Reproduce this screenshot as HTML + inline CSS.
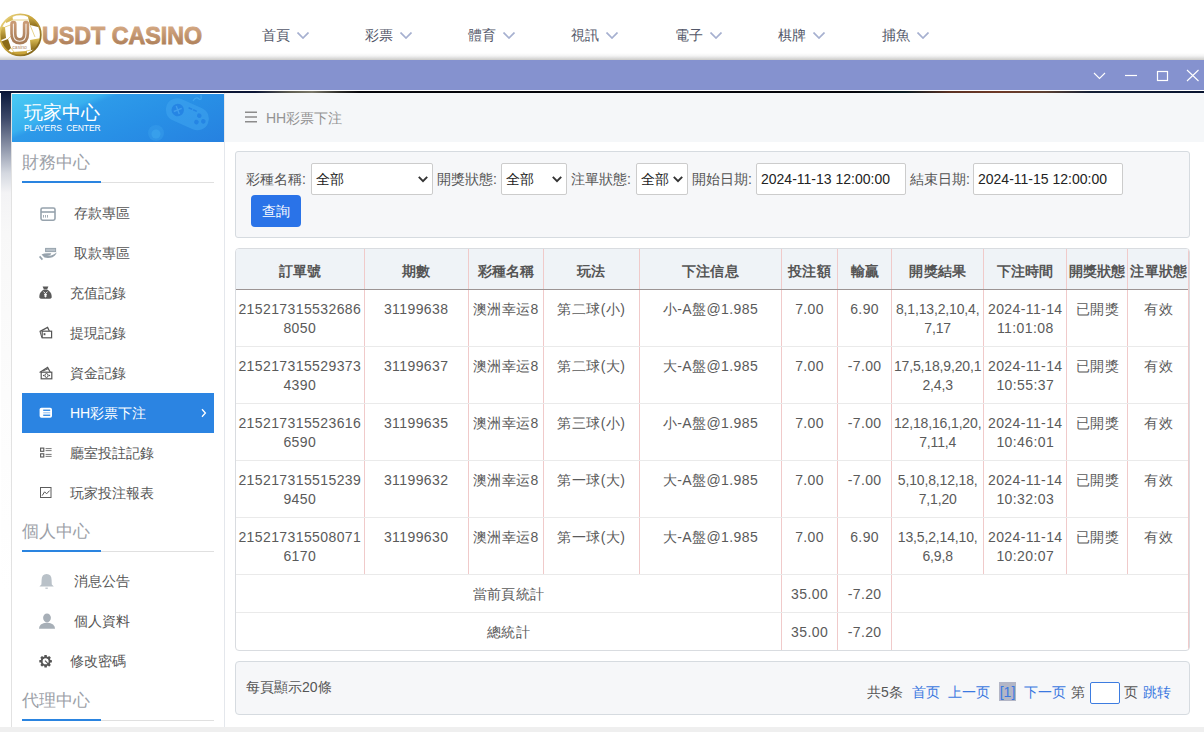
<!DOCTYPE html>
<html><head><meta charset="utf-8">
<style>
*{box-sizing:border-box;margin:0;padding:0}
html,body{width:1204px;height:732px;overflow:hidden;background:#fff;font-family:"Liberation Sans",sans-serif;position:relative}
.abs{position:absolute}
/* header */
#hdr{left:0;top:0;width:1204px;height:60px;background:#fff}
#hdrshadow{left:0;top:53px;width:1204px;height:7px;background:linear-gradient(#fff 0,#f4f4f4 40%,#dcdcdc 75%,#cdcbc7 100%)}
.nav{top:26px;font-size:14px;color:#535769;line-height:18px;white-space:nowrap}
.nav svg{position:absolute;left:35px;top:6px}
#purple{left:0;top:60px;width:1204px;height:30px;background:#8592cf}
#wline{left:0;top:90px;width:1204px;height:1px;background:#fff}
#dline{left:0;top:91px;width:1204px;height:2px;background:linear-gradient(to right,#0b1636 0,#0b1636 255px,#5e5d52 290px,#7a786a 312px,#2a2a28 340px,#05060c 360px,#05060c 850px,#0a1a22 905px,#5c3224 950px,#6e3a28 1000px,#5c4032 1045px,#142036 1090px,#081430 1204px)}
/* left strip */
#strip{left:1px;top:93px;width:10px;height:634px;background:linear-gradient(#0c1a3c 0,#3c4868 25px,#8e96aa 55px,#d4d8e0 80px,#f3f3f5 100px,#f8f8f8 140px,#fcfcfc 300px,#fff 500px)}
#side{left:11px;top:93px;width:214px;height:634px;background:#fff;border-left:1px solid #e2e2e2;border-right:1px solid #e4e7ec}
#sidehead{left:12px;top:94px;width:212px;height:48px;background:linear-gradient(157deg,#4acbf4 0%,#38b0ef 28%,#2d9ae9 33%,#2890e6 60%,#2681e0 100%)}
.sectitle{left:22px;font-size:17px;color:#9ca1a8;line-height:20px;margin-top:1px}
.secline{left:22px;width:192px;height:2px;border-bottom:1px solid #e0e0e0}
.secline i{position:absolute;left:0;top:0;width:79px;height:2px;background:#2a84e0}
.mi{font-size:14px;color:#555;line-height:16px;white-space:nowrap}
.ico{position:absolute}
#active{left:22px;top:393px;width:192px;height:40px;background:#2b84e2}
/* main */
#crumb{left:225px;top:93px;width:979px;height:49px;background:#f5f7f9}
#panel{left:235px;top:151px;width:955px;height:87px;background:#f6f7f9;border:1px solid #d6dbe0;border-radius:3px}
.lbl{font-size:14px;color:#555;line-height:16px;white-space:nowrap}
.sel{background:#fff;border:1px solid #ccc;border-radius:2px;height:32px;font-size:14px;color:#222;line-height:30px;padding-left:4px;white-space:nowrap}
.sel svg{position:absolute;right:4px;top:12px}
#btn{left:251px;top:195px;width:50px;height:32px;background:#2a73e8;border-radius:4px;color:#fff;font-size:14px;line-height:32px;text-align:center}
#bottomstrip{left:0;top:727px;width:1204px;height:5px;background:#efefef}
/* table */
#tbl{left:235px;top:248px;width:955px;height:403px;border:1px solid #d9dce0;border-radius:4px;overflow:hidden;background:#fff}
table{border-collapse:collapse;table-layout:fixed;width:953px}
td,th{font-size:14px;letter-spacing:0.4px;color:#5a5a5a;text-align:center;vertical-align:top;line-height:19px;white-space:nowrap;overflow:hidden}
th{height:40px;padding-top:5px;background:#eff3f7;font-weight:bold;color:#555;vertical-align:middle;border-bottom:1px solid #9c9494;border-left:1px solid #f0caca}
td{height:57px;padding-top:10px;border-left:1px solid #f0caca;border-bottom:1px solid #eaeaea}
tr.sum td{height:38px;padding-top:10px}
th:first-child,td:first-child{border-left:none}
td:nth-child(8){letter-spacing:-0.15px;overflow:visible}
th{letter-spacing:0.1px}
#pager{left:235px;top:661px;width:955px;height:54px;background:#f6f7f9;border:1px solid #d6dbe0;border-radius:4px}
.pg{font-size:14px;color:#555;line-height:16px;white-space:nowrap}
.blue{color:#3a78e0}
</style></head><body>
<div id="hdr" class="abs"></div>
<div id="hdrshadow" class="abs"></div>
<!-- logo -->
<svg class="abs" style="left:0;top:8px" width="210" height="52" viewBox="0 8 210 52">
<defs>
<linearGradient id="gold" x1="0" y1="0" x2="1" y2="1"><stop offset="0" stop-color="#efdc8c"/><stop offset=".45" stop-color="#c9a43a"/><stop offset="1" stop-color="#6e5310"/></linearGradient>
<linearGradient id="gold2" x1="0" y1="0" x2="0" y2="1"><stop offset="0" stop-color="#e2c45a"/><stop offset="1" stop-color="#8a6a18"/></linearGradient>
<linearGradient id="txt" x1="0" y1="0" x2="0" y2="1"><stop offset="0" stop-color="#dcb08a"/><stop offset="1" stop-color="#a57650"/></linearGradient>
<linearGradient id="ug" x1="0" y1="0" x2="0" y2="1"><stop offset="0" stop-color="#c99a74"/><stop offset="1" stop-color="#a87c58"/></linearGradient>
</defs>
<clipPath id="ballclip"><circle cx="20.3" cy="34.8" r="20.6"/></clipPath>
<circle cx="20.3" cy="34.8" r="21" fill="#fff"/>
<g clip-path="url(#ballclip)">
<path d="M27 13.5 L39 20 L38 27 L30 25 Z" fill="url(#gold2)"/>
<path d="M5 15 L12 13.5 L13 20 L6 23 Z" fill="#d9bc5a"/>
<path d="M-1 26 L5 27 L6 38 L-1 41 Z" fill="url(#gold2)"/>
<path d="M0 42 L8 39 L11 48 L5 54 Z" fill="#8a6a18"/>
<path d="M30 40 L41 38 L39 49 L31 50 Z" fill="url(#gold2)"/>
<path d="M12 52 L27 51 L27 58 L13 58 Z" fill="#c9a43a"/>
<path d="M12 20 L28 20 M5 27 L13 24 M30 25 L35 37 M8 39 L12 35 M31 50 L26 51 M11 48 L14 52" stroke="#e0c870" stroke-width="0.8" fill="none"/>
</g>
<circle cx="20.3" cy="34.8" r="20.5" fill="none" stroke="url(#gold)" stroke-width="1.8"/>
<path d="M13.4 24 V33.5 Q13.4 41.2 19.7 41.2 Q26 41.2 26 33.5 V24" stroke="url(#ug)" stroke-width="6.4" fill="none" stroke-linecap="round"/>
<path d="M13.4 24 V33.5 Q13.4 41.2 19.7 41.2 Q26 41.2 26 33.5 V24" stroke="#fff" stroke-width="1.1" fill="none" stroke-linecap="round" opacity=".85"/>
<text x="19.6" y="48.8" font-family="Liberation Sans" font-size="5" fill="#b08a6a" text-anchor="middle">casino</text>
<text x="42" y="44.4" font-family="Liberation Sans" font-weight="bold" font-size="24.6" fill="url(#txt)" stroke="url(#txt)" stroke-width="0.9" textLength="160" lengthAdjust="spacingAndGlyphs">USDT CASINO</text>
</svg>
<!-- nav -->
<div class="abs nav" style="left:262px">首頁<svg width="12" height="7" viewBox="0 0 12 7"><path d="M0.5 0.5 L6 6 L11.5 0.5" stroke="#a6b0d0" stroke-width="1.7" fill="none"/></svg></div>
<div class="abs nav" style="left:365px">彩票<svg width="12" height="7" viewBox="0 0 12 7"><path d="M0.5 0.5 L6 6 L11.5 0.5" stroke="#a6b0d0" stroke-width="1.7" fill="none"/></svg></div>
<div class="abs nav" style="left:468px">體育<svg width="12" height="7" viewBox="0 0 12 7"><path d="M0.5 0.5 L6 6 L11.5 0.5" stroke="#a6b0d0" stroke-width="1.7" fill="none"/></svg></div>
<div class="abs nav" style="left:571px">視訊<svg width="12" height="7" viewBox="0 0 12 7"><path d="M0.5 0.5 L6 6 L11.5 0.5" stroke="#a6b0d0" stroke-width="1.7" fill="none"/></svg></div>
<div class="abs nav" style="left:675px">電子<svg width="12" height="7" viewBox="0 0 12 7"><path d="M0.5 0.5 L6 6 L11.5 0.5" stroke="#a6b0d0" stroke-width="1.7" fill="none"/></svg></div>
<div class="abs nav" style="left:778px">棋牌<svg width="12" height="7" viewBox="0 0 12 7"><path d="M0.5 0.5 L6 6 L11.5 0.5" stroke="#a6b0d0" stroke-width="1.7" fill="none"/></svg></div>
<div class="abs nav" style="left:882px">捕魚<svg width="12" height="7" viewBox="0 0 12 7"><path d="M0.5 0.5 L6 6 L11.5 0.5" stroke="#a6b0d0" stroke-width="1.7" fill="none"/></svg></div>

<div id="purple" class="abs"></div>
<svg class="abs" style="left:1090px;top:66px" width="114" height="20" viewBox="1090 66 114 20">
<path d="M1094 73 L1099.5 78.5 L1105 73" stroke="#fff" stroke-width="1.1" fill="none"/>
<path d="M1125 75.5 H1137" stroke="#fff" stroke-width="1.2"/>
<rect x="1157.5" y="71.5" width="10" height="9" stroke="#fff" stroke-width="1.2" fill="none"/>
<path d="M1187 70 L1198.5 81 M1198.5 70 L1187 81" stroke="#fff" stroke-width="1.1"/>
</svg>
<div id="wline" class="abs"></div>
<div id="dline" class="abs"></div>

<!-- sidebar -->
<div id="strip" class="abs"></div>
<div id="side" class="abs"></div>
<div id="sidehead" class="abs"></div>
<svg class="abs" style="left:12px;top:94px" width="212" height="48" viewBox="12 94 212 48">
<path d="M22 94 L12 94 L12 120 Z" fill="#46c9f3" opacity=".0"/>
<g transform="rotate(24 188 114)">
<rect x="165" y="103" width="45" height="23" rx="11.5" fill="#3ea4ee" opacity=".6"/>
<circle cx="177" cy="114.5" r="6.2" fill="#2585e4"/>
<path d="M174 111.5 L180 117.5 M180 111.5 L174 117.5" stroke="#3f9ded" stroke-width="1.4"/>
<circle cx="199" cy="111" r="2.3" fill="#2585e4"/><circle cx="205" cy="114.5" r="2.3" fill="#2585e4"/>
<circle cx="199" cy="118" r="2.3" fill="#2585e4"/><circle cx="193" cy="114.5" r="2.3" fill="#2585e4" opacity=".0"/>
<path d="M186 108 H190 M191 108 H195" stroke="#2585e4" stroke-width="1.5"/>
</g>
<path d="M193 101 Q196 96 199 99 Q202 101 201 95" stroke="#3ea4ee" stroke-width="1.2" fill="none"/>
<circle cx="156" cy="133" r="8" fill="#3aa0ec" opacity=".45"/>
<circle cx="156" cy="134" r="4.5" fill="#3ea6ee" opacity=".6"/>
</svg>
<div class="abs" style="left:24px;top:103px;font-size:19px;line-height:20px;color:#fff;white-space:nowrap">玩家中心</div>
<div class="abs" style="left:24px;top:123px;font-size:8.5px;line-height:10px;color:#fff;letter-spacing:-0.12px;white-space:nowrap">PLAYERS&nbsp; CENTER</div>

<div class="abs sectitle" style="top:152px">財務中心</div>
<div class="abs secline" style="top:181px"><i></i></div>

<div class="abs mi" style="left:74px;top:205px">存款專區</div>
<div class="abs mi" style="left:74px;top:245px">取款專區</div>
<div class="abs mi" style="left:70px;top:285px">充值記錄</div>
<div class="abs mi" style="left:70px;top:325px">提現記錄</div>
<div class="abs mi" style="left:70px;top:365px">資金記錄</div>
<div id="active" class="abs"></div>
<div class="abs mi" style="left:70px;top:405px;color:#fff">HH彩票下注</div>
<div class="abs mi" style="left:70px;top:445px">廳室投註記錄</div>
<div class="abs mi" style="left:70px;top:485px">玩家投注報表</div>

<div class="abs sectitle" style="top:521px">個人中心</div>
<div class="abs secline" style="top:550px"><i></i></div>
<div class="abs mi" style="left:74px;top:573px">消息公告</div>
<div class="abs mi" style="left:74px;top:613px">個人資料</div>
<div class="abs mi" style="left:70px;top:653px">修改密碼</div>
<div class="abs sectitle" style="top:690px">代理中心</div>
<div class="abs secline" style="top:719px"><i></i></div>

<svg class="abs" style="left:0;top:0;z-index:3" width="230" height="732" viewBox="0 0 230 732">
<!-- card -->
<rect x="41" y="208" width="14" height="12.2" rx="1.6" fill="none" stroke="#97a3ad" stroke-width="1.6"/>
<path d="M41 212H55" stroke="#97a3ad" stroke-width="1.6"/>
<path d="M43.5 215V217.6M45.5 215V217.6M47.5 215V217.6" stroke="#97a3ad" stroke-width="0.9"/>
<!-- hand -->
<rect x="45.6" y="248.4" width="10" height="3.2" fill="#b7c0c8" stroke="#97a3ad" stroke-width="1"/>
<path d="M41.5 254.6 Q44 253.2 47.5 253.2 L51.3 253.3 Q51.2 255.2 48.6 255.4 L46.8 255.6 Q50.5 256.2 53.5 254.4 L56.8 252.6 Q55.8 255.6 52.5 257.3 Q48.5 258.6 44.5 257.6 Z" fill="#97a3ad"/>
<path d="M39.6 256.4 L42.4 259.6" stroke="#97a3ad" stroke-width="1.7"/>
<!-- money bag -->
<path d="M42.6 286.4 H48.4 L47.2 289.2 H43.8 Z" fill="#585858"/>
<path d="M44 289.4 C40.2 291.4 39 294.8 39.4 297.4 Q39.8 298.8 41.6 298.8 H49.4 Q51.2 298.8 51.6 297.4 C52 294.8 50.8 291.4 47 289.4 Z" fill="#585858"/>
<path d="M43.6 291.6 L45.5 293.8 L47.4 291.6 M45.5 293.8 V297.4 M44 294.6 H47 M44 296 H47" stroke="#fff" stroke-width="0.9" fill="none"/>
<!-- wallet -->
<path d="M39.6 331.6 L47.6 327.4 L49.4 331.2" stroke="#555" stroke-width="1.2" fill="none"/>
<rect x="42.2" y="331.2" width="9.4" height="6.6" fill="#fff" stroke="#555" stroke-width="1.2"/>
<rect x="43.6" y="333.2" width="1.8" height="2" fill="#555"/>
<path d="M40.2 332 L41.8 337.6" stroke="#555" stroke-width="1"/>
<!-- cash -->
<path d="M39.6 372.4 L47.6 367.4 L50.2 372" stroke="#555" stroke-width="1.2" fill="none"/>
<path d="M43 371 L48 368.8" stroke="#555" stroke-width="0.9"/>
<rect x="41.2" y="372.2" width="10.6" height="6.6" fill="#fff" stroke="#555" stroke-width="1.2"/>
<ellipse cx="46.5" cy="375.5" rx="1.6" ry="2" fill="none" stroke="#555" stroke-width="1"/>
<circle cx="43.6" cy="375.5" r="0.7" fill="#555"/><circle cx="49.4" cy="375.5" r="0.7" fill="#555"/>
<!-- active list -->
<rect x="39.6" y="407.8" width="12.4" height="10" rx="1.8" fill="#fff"/>
<rect x="43.2" y="409.6" width="7" height="1.3" fill="#2b84e2"/>
<rect x="43.2" y="412.3" width="7" height="1" fill="#8fbcee"/>
<rect x="43.2" y="414.6" width="7" height="1.3" fill="#2b84e2"/>
<path d="M202 409.2 L205.4 413 L202 416.8" stroke="#fff" stroke-width="1.3" fill="none"/>
<!-- list 2 -->
<rect x="40.6" y="448.1" width="3.2" height="3.2" fill="none" stroke="#555" stroke-width="1.1"/>
<rect x="40.6" y="453.8" width="3.2" height="3.2" fill="none" stroke="#555" stroke-width="1.1"/>
<path d="M45.6 448.6H51.6M45.6 450.6H51.6M45.6 454.4H51.6M45.6 456.4H51.6" stroke="#6a6a6a" stroke-width="0.9"/>
<!-- chart -->
<rect x="40.5" y="487.5" width="10.5" height="10" fill="none" stroke="#5c5c5c" stroke-width="1"/>
<path d="M42.2 495.6 L44.6 491.8 L46.6 493.8 L49.6 490.6" stroke="#555" stroke-width="1" fill="none"/>
<!-- bell -->
<path d="M46.6 574 Q41.6 574.2 41.6 580 L41.4 584.6 L39.4 586.6 H53.8 L51.8 584.6 L51.6 580 Q51.6 574.2 46.6 574 Z" fill="#b9c1c8"/>
<path d="M45.4 588.2 H47.8" stroke="#b9c1c8" stroke-width="1.2"/>
<!-- user -->
<ellipse cx="47" cy="617.8" rx="3.9" ry="4.4" fill="#a7afb7"/>
<path d="M39 628.8 Q38.8 623.2 47 622.4 Q55.2 623.2 55 628.8 Z" fill="#a7afb7"/>
<!-- gear -->
<g transform="translate(45.6 661.3)"><circle r="4.0" fill="none" stroke="#555" stroke-width="1.8"/><rect x="-1.3" y="-6.3" width="2.6" height="3" rx="0.6" fill="#555" transform="rotate(0)"/><rect x="-1.3" y="-6.3" width="2.6" height="3" rx="0.6" fill="#555" transform="rotate(45)"/><rect x="-1.3" y="-6.3" width="2.6" height="3" rx="0.6" fill="#555" transform="rotate(90)"/><rect x="-1.3" y="-6.3" width="2.6" height="3" rx="0.6" fill="#555" transform="rotate(135)"/><rect x="-1.3" y="-6.3" width="2.6" height="3" rx="0.6" fill="#555" transform="rotate(180)"/><rect x="-1.3" y="-6.3" width="2.6" height="3" rx="0.6" fill="#555" transform="rotate(225)"/><rect x="-1.3" y="-6.3" width="2.6" height="3" rx="0.6" fill="#555" transform="rotate(270)"/><rect x="-1.3" y="-6.3" width="2.6" height="3" rx="0.6" fill="#555" transform="rotate(315)"/><path d="M-0.6 -0.6 L2.6 2.6" stroke="#555" stroke-width="1.2"/></g>
</svg>
<!-- main -->
<div id="crumb" class="abs"></div>
<svg class="abs" style="left:245px;top:111px" width="12" height="12" viewBox="0 0 12 12"><path d="M0 1.2H12M0 6H12M0 10.8H12" stroke="#8c8c8c" stroke-width="1.6"/></svg>
<div class="abs" style="left:266px;top:110px;font-size:14px;color:#939393;line-height:16px;white-space:nowrap">HH彩票下注</div>

<div id="panel" class="abs"></div>
<div class="abs lbl" style="left:246px;top:171px">彩種名稱:</div>
<div class="abs sel" style="left:311px;top:163px;width:122px">全部<svg width="10" height="7" viewBox="0 0 10 7"><path d="M0.8 0.8 L5 5.2 L9.2 0.8" stroke="#333" stroke-width="1.9" fill="none"/></svg></div>
<div class="abs lbl" style="left:437px;top:171px">開獎狀態:</div>
<div class="abs sel" style="left:501px;top:163px;width:66px">全部<svg width="10" height="7" viewBox="0 0 10 7"><path d="M0.8 0.8 L5 5.2 L9.2 0.8" stroke="#333" stroke-width="1.9" fill="none"/></svg></div>
<div class="abs lbl" style="left:571px;top:171px">注單狀態:</div>
<div class="abs sel" style="left:636px;top:163px;width:52px">全部<svg width="10" height="7" viewBox="0 0 10 7"><path d="M0.8 0.8 L5 5.2 L9.2 0.8" stroke="#333" stroke-width="1.9" fill="none"/></svg></div>
<div class="abs lbl" style="left:692px;top:171px">開始日期:</div>
<div class="abs sel" style="left:756px;top:163px;width:150px">2024-11-13 12:00:00</div>
<div class="abs lbl" style="left:910px;top:171px">結束日期:</div>
<div class="abs sel" style="left:973px;top:163px;width:150px">2024-11-15 12:00:00</div>
<div id="btn" class="abs">查詢</div>

<div id="tbl" class="abs"><div style="position:absolute;right:0;top:0;bottom:0;width:1px;background:#f0caca;z-index:2"></div>
<table>
<colgroup><col style="width:128px"><col style="width:104px"><col style="width:75px"><col style="width:96px"><col style="width:142px"><col style="width:56px"><col style="width:54px"><col style="width:92px"><col style="width:83px"><col style="width:61px"><col style="width:61px"></colgroup>
<tr><th>訂單號</th><th>期數</th><th>彩種名稱</th><th>玩法</th><th>下注信息</th><th>投注額</th><th>輸贏</th><th>開獎結果</th><th>下注時間</th><th>開獎狀態</th><th>注單狀態</th></tr>
<tr><td>215217315532686<br>8050</td><td>31199638</td><td>澳洲幸运8</td><td>第二球(小)</td><td>小-A盤@1.985</td><td>7.00</td><td>6.90</td><td>8,1,13,2,10,4,<br>7,17</td><td>2024-11-14<br>11:01:08</td><td>已開獎</td><td>有效</td></tr>
<tr><td>215217315529373<br>4390</td><td>31199637</td><td>澳洲幸运8</td><td>第二球(大)</td><td>大-A盤@1.985</td><td>7.00</td><td>-7.00</td><td>17,5,18,9,20,1<br>2,4,3</td><td>2024-11-14<br>10:55:37</td><td>已開獎</td><td>有效</td></tr>
<tr><td>215217315523616<br>6590</td><td>31199635</td><td>澳洲幸运8</td><td>第三球(小)</td><td>小-A盤@1.985</td><td>7.00</td><td>-7.00</td><td>12,18,16,1,20,<br>7,11,4</td><td>2024-11-14<br>10:46:01</td><td>已開獎</td><td>有效</td></tr>
<tr><td>215217315515239<br>9450</td><td>31199632</td><td>澳洲幸运8</td><td>第一球(大)</td><td>大-A盤@1.985</td><td>7.00</td><td>-7.00</td><td>5,10,8,12,18,<br>7,1,20</td><td>2024-11-14<br>10:32:03</td><td>已開獎</td><td>有效</td></tr>
<tr><td>215217315508071<br>6170</td><td>31199630</td><td>澳洲幸运8</td><td>第一球(大)</td><td>大-A盤@1.985</td><td>7.00</td><td>6.90</td><td>13,5,2,14,10,<br>6,9,8</td><td>2024-11-14<br>10:20:07</td><td>已開獎</td><td>有效</td></tr>
<tr class="sum"><td colspan="5">當前頁統計</td><td>35.00</td><td>-7.20</td><td colspan="4"></td></tr>
<tr class="sum"><td colspan="5" style="border-bottom:none">總統計</td><td style="border-bottom:none">35.00</td><td style="border-bottom:none">-7.20</td><td colspan="4" style="border-bottom:none"></td></tr>
</table>
</div>

<div id="pager" class="abs"></div>
<div class="abs pg" style="left:246px;top:679px">每頁顯示20條</div>
<div class="abs pg" style="left:867px;top:684px">共5条</div>
<div class="abs pg blue" style="left:912px;top:684px">首页</div>
<div class="abs pg blue" style="left:948px;top:684px">上一页</div>
<div class="abs" style="left:999px;top:682px;width:17px;height:19px;background:#b3b6c6"></div>
<div class="abs pg blue" style="left:999px;top:684px;width:17px;text-align:center">[1]</div>
<div class="abs pg blue" style="left:1024px;top:684px">下一页</div>
<div class="abs pg" style="left:1071px;top:684px">第</div>
<div class="abs" style="left:1090px;top:682px;width:30px;height:22px;border:1px solid #3d7ce0;border-radius:2px;background:#fff"></div>
<div class="abs pg" style="left:1124px;top:684px">页</div>
<div class="abs pg blue" style="left:1143px;top:684px">跳转</div>

<div id="bottomstrip" class="abs"></div>
</body></html>
